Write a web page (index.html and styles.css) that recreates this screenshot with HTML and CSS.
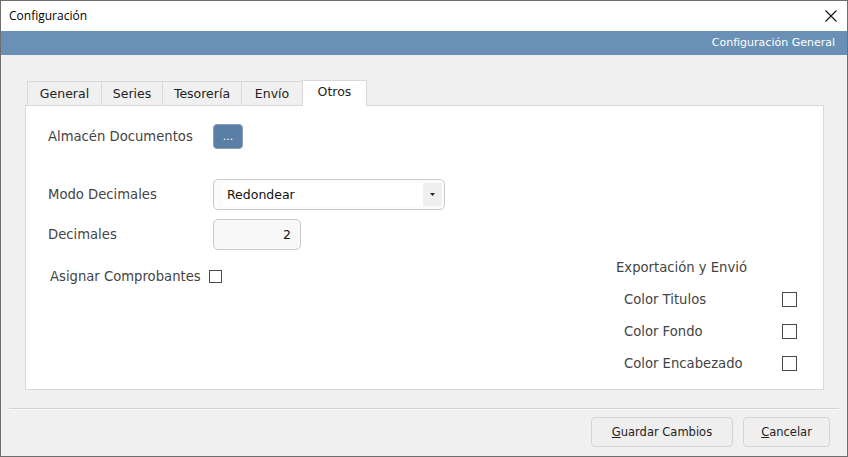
FILE: index.html
```html
<!DOCTYPE html>
<html lang="es">
<head>
<meta charset="utf-8">
<title>Configuración</title>
<link rel="stylesheet" href="styles.css">
</head>
<body>
<div class="window">
  <div class="titlebar">
    <span class="title">Configuración</span>
    <span class="close">
      <svg width="12" height="12" viewBox="0 0 12 12"><path d="M0.5 0.5 L11.5 11.5 M11.5 0.5 L0.5 11.5" stroke="#111" stroke-width="1.1" fill="none"/></svg>
    </span>
  </div>
  <div class="band">Configuración General</div>
  <div class="body">
    <div class="tabs">
      <div class="tab">General</div>
      <div class="tab">Series</div>
      <div class="tab">Tesorería</div>
      <div class="tab">Envío</div>
      <div class="tab tab-active">Otros</div>
    </div>
    <div class="panel">
      <div class="row row-almacen">
        <span class="label">Almacén Documentos</span>
        <button class="dots">...</button>
      </div>
      <div class="row row-modo">
        <span class="label">Modo Decimales</span>
        <div class="select">
          <span class="select-value">Redondear</span>
          <span class="select-arrow"><svg width="5" height="3" viewBox="0 0 5 3"><path d="M0 0 H5 L2.5 3 Z" fill="#222"/></svg></span>
        </div>
      </div>
      <div class="row row-dec">
        <span class="label">Decimales</span>
        <div class="number">2</div>
      </div>
      <div class="lower">
        <div class="assign">
          <span class="label-assign">Asignar Comprobantes</span>
          <span class="check check-small"></span>
        </div>
        <div class="export">
          <div class="export-title">Exportación y Envió</div>
          <div class="export-row"><span>Color Titulos</span><span class="check"></span></div>
          <div class="export-row"><span>Color Fondo</span><span class="check"></span></div>
          <div class="export-row"><span>Color Encabezado</span><span class="check"></span></div>
        </div>
      </div>
    </div>
    <div class="separator"></div>
    <div class="buttons">
      <button class="btn btn-save"><u>G</u>uardar Cambios</button>
      <button class="btn btn-cancel"><u>C</u>ancelar</button>
    </div>
  </div>
</div>
</body>
</html>
```

FILE: styles.css
```css
* { box-sizing: border-box; }
html, body { margin: 0; padding: 0; }
body {
  width: 848px;
  height: 457px;
  overflow: hidden;
  background: #f0f0f0;
  font-family: "DejaVu Sans", sans-serif;
}
.window {
  width: 848px;
  height: 457px;
  border: 1px solid #6e6e6e;
  background: #f0f0f0;
  display: flex;
  flex-direction: column;
}
.titlebar {
  height: 30px;
  background: #ffffff;
  display: flex;
  align-items: center;
  justify-content: space-between;
  padding: 0 10px 0 8px;
}
.title {
  font-family: "Open Sans", "Noto Sans", sans-serif;
  font-size: 12px;
  color: #000;
  margin-top: -1px;
}
.close {
  display: flex;
  width: 12px;
  height: 12px;
  margin-top: -1px;
}
.band {
  height: 24px;
  background: #6a91b5;
  color: #ffffff;
  font-size: 11px;
  text-align: right;
  line-height: 24px;
  padding-right: 12px;
}
.body {
  flex: 1;
  display: flex;
  flex-direction: column;
  padding-top: 25px;
}
.tabs {
  display: grid;
  grid-template-columns: 74px 61px 79px 61px 65px;
  align-items: end;
  height: 25px;
  margin-left: 26px;
  font-size: 12.5px;
  color: #222;
}
.tab {
  height: 24px;
  border-top: 1px solid #d9d9d9;
  border-left: 1px solid #d9d9d9;
  background: #f0f0f0;
  text-align: center;
  line-height: 23px;
}
.tab-active {
  height: 26px;
  margin-bottom: -1px;
  background: #ffffff;
  border-right: 1px solid #d9d9d9;
  line-height: 22px;
  position: relative;
  z-index: 1;
}
.panel {
  margin-left: 24px;
  width: 799px;
  height: 285px;
  background: #ffffff;
  border: 1px solid #d9d9d9;
  padding: 0 26px 0 22px;
  font-size: 13.2px;
  color: #444;
}
.row {
  display: grid;
  grid-template-columns: 165px auto;
  align-items: center;
}
.row-almacen { margin-top: 18px; height: 25px; }
.row-modo { margin-top: 30px; height: 31px; }
.row-dec { margin-top: 9px; height: 31px; }
.dots {
  width: 30px;
  height: 25px;
  padding: 0;
  border: 1px solid #8aa0b8;
  border-radius: 4px;
  background: #5b7ea4;
  color: #ffffff;
  font-family: "DejaVu Sans", sans-serif;
  font-size: 11px;
  line-height: 18px;
}
.select {
  width: 232px;
  height: 31px;
  border: 1px solid #cacaca;
  border-radius: 5px;
  background: #fbfbfb;
  display: flex;
  align-items: stretch;
  padding: 3px 2px 3px 9px;
  font-size: 12.5px;
}
.select-value {
  flex: 1;
  background: #ffffff;
  color: #111;
  padding-left: 4px;
  line-height: 23px;
}
.select-arrow {
  width: 19px;
  background: #efefef;
  display: flex;
  align-items: center;
  justify-content: center;
}
.number {
  width: 88px;
  height: 31px;
  border: 1px solid #cacaca;
  border-radius: 5px;
  background: #f8f8f8;
  text-align: right;
  padding-right: 9px;
  line-height: 29px;
  color: #111;
  font-size: 12.5px;
}
.lower {
  display: flex;
  justify-content: space-between;
}
.assign {
  display: flex;
  align-items: center;
  margin-top: 19px;
  margin-left: 2px;
  height: 14px;
}
.label-assign { margin-right: 8px; }
.check {
  width: 15px;
  height: 15px;
  border: 1px solid #4a4a4a;
  background: #ffffff;
  display: block;
}
.check-small { width: 13px; height: 13px; }
.export {
  width: 181px;
  margin-top: 10px;
}
.export-title {
  height: 16px;
  line-height: 16px;
}
.export-row {
  display: flex;
  justify-content: space-between;
  align-items: center;
  height: 15px;
  margin-top: 16px;
  padding-left: 8px;
  margin-bottom: 1px;
}
.export-row + .export-row { margin-top: 17px; }
.separator {
  margin: 18px 8px 0 8px;
  height: 2px;
  border-top: 1px solid #d2d2d2;
  border-bottom: 1px solid #fafafa;
}
.buttons {
  display: flex;
  justify-content: flex-end;
  gap: 10px;
  margin-top: 7px;
  padding-right: 17px;
}
.btn {
  height: 30px;
  border: 1px solid #d4d4d4;
  border-radius: 4px;
  background: #efefef;
  font-family: "DejaVu Sans", sans-serif;
  font-size: 11.5px;
  color: #222;
  padding: 0;
}
.btn-save { width: 142px; }
.btn-cancel { width: 87px; }
```
